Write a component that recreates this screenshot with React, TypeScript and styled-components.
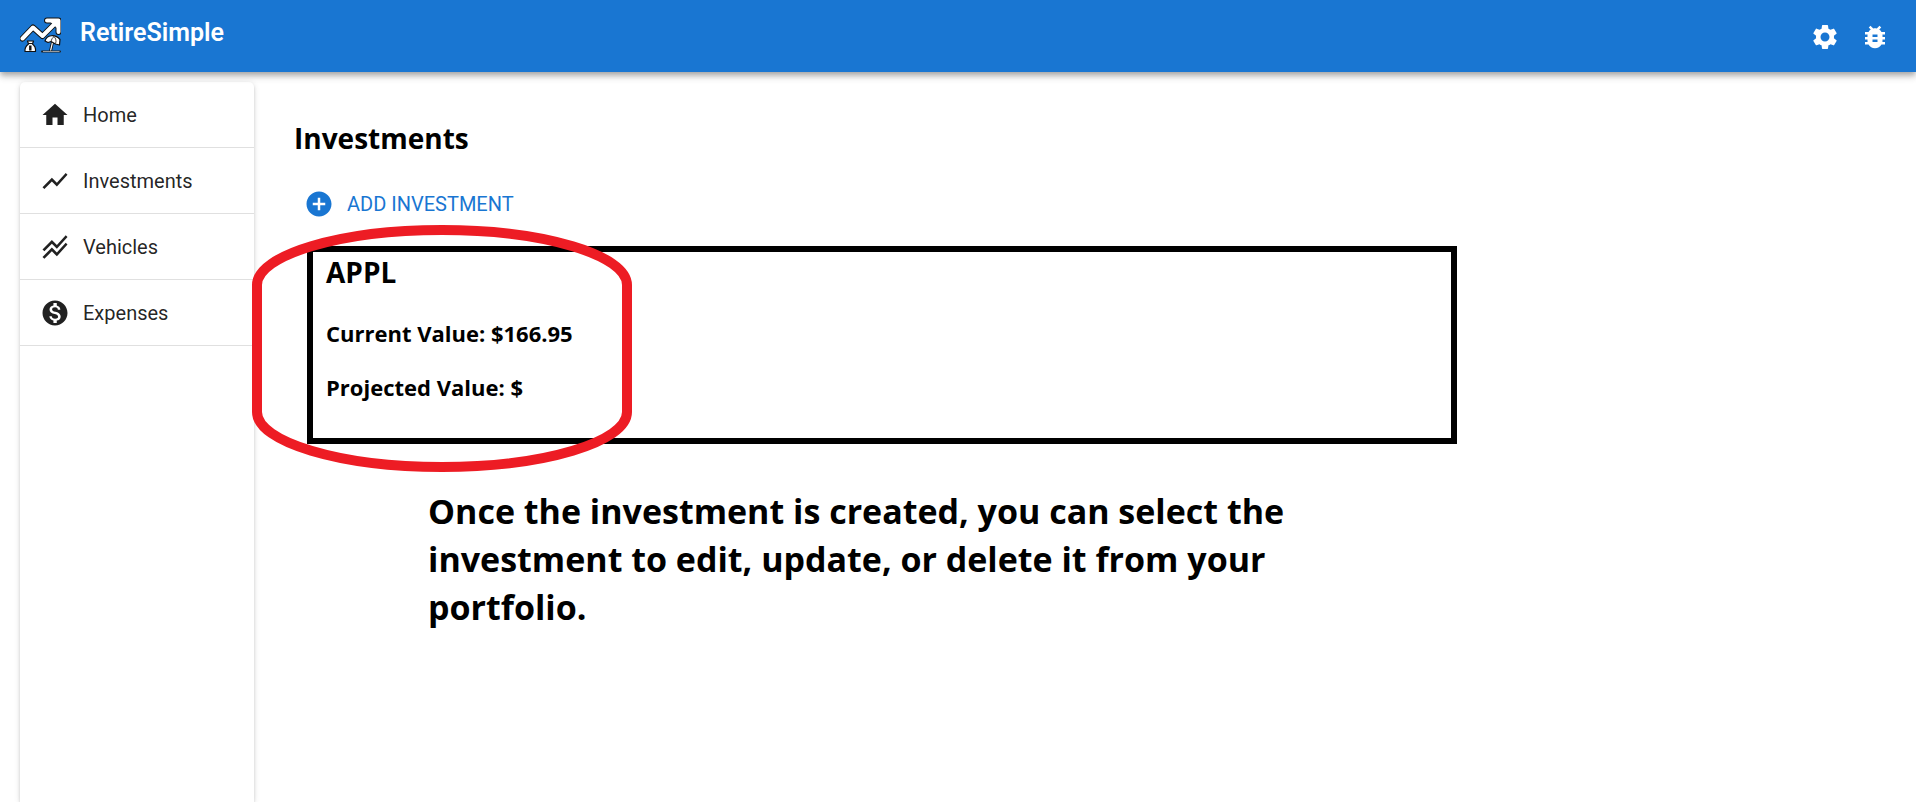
import React from 'react';
import styled, { createGlobalStyle } from 'styled-components';
import {
  MdAddCircle,
  MdBugReport,
  MdHome,
  MdMonetizationOn,
  MdSettings,
  MdShowChart,
  MdStackedLineChart,
} from 'react-icons/md';

const GlobalStyle = createGlobalStyle`
  *, *::before, *::after { box-sizing: border-box; }
  body {
    margin: 0;
    background: #fff;
    color: #000;
    font-family: 'Segoe UI', 'Open Sans', 'Noto Sans', sans-serif;
  }
`;

const ui = `Roboto, 'Liberation Sans', sans-serif`;

const Page = styled.div`
  display: flex;
  flex-direction: column;
  min-height: 100vh;
`;

const TopBar = styled.header`
  position: relative;
  display: flex;
  align-items: flex-start;
  padding: 12px 16px 10px 20px;
  background: #1976d2;
  color: #fff;
  box-shadow: 0 3px 5px -1px rgba(0, 0, 0, 0.2), 0 5px 6px 0 rgba(0, 0, 0, 0.14),
    0 1px 12px 0 rgba(0, 0, 0, 0.12);
`;

const Brand = styled.a`
  display: flex;
  align-items: flex-start;
  gap: 19px;
  margin-right: auto;
  padding-top: 5px;
  color: inherit;
  text-decoration: none;
`;

const BrandName = styled.span`
  font: 600 25px/32px ${ui};
`;

const IconButton = styled.button`
  display: flex;
  align-items: center;
  justify-content: center;
  width: 50px;
  height: 50px;
  border: 0;
  border-radius: 50%;
  background: none;
  color: inherit;
  font-size: 30px;
  cursor: pointer;
`;

const Body = styled.div`
  display: flex;
  flex: 1;
  gap: 40px;
  padding: 10px 20px 0;
`;

const Sidebar = styled.nav`
  flex: none;
  width: 234px;
  border-radius: 5px 5px 0 0;
  background: #fff;
  box-shadow: 0 3px 1px -2px rgba(0, 0, 0, 0.2), 0 2px 3px 0 rgba(0, 0, 0, 0.14),
    0 1px 6px 0 rgba(0, 0, 0, 0.12);
`;

const MenuList = styled.ul`
  margin: 0;
  padding: 0;
  list-style: none;
`;

const MenuItem = styled.li`
  border-bottom: 1px solid #e0e0e0;
`;

const MenuLink = styled.a`
  display: flex;
  align-items: center;
  gap: 13px;
  height: 65px;
  padding: 0 20px;
  color: rgba(0, 0, 0, 0.87);
  font: 400 20px/30px ${ui};
  text-decoration: none;

  svg { font-size: 30px; }
`;

const Main = styled.main`
  flex: 1;
  min-width: 0;
  padding: 36px 0 40px;
`;

const Heading = styled.h2`
  margin: 0;
  font-size: 28px;
  line-height: 40px;
  font-weight: 700;
`;

const AddButton = styled.button`
  display: flex;
  align-items: center;
  gap: 13px;
  margin: 21px 0 17px;
  padding: 10px;
  border: 0;
  background: none;
  color: #1976d2;
  font: 400 20px/30px ${ui};
  text-transform: uppercase;
  cursor: pointer;

  svg { font-size: 30px; }
`;

const CardArea = styled.div`
  position: relative;
  width: 60vw;
  margin-left: 13px;
`;

const Card = styled.article`
  padding: 0 13px 12px;
  border: 6px solid #000;
`;

const Ticker = styled.h2`
  margin: 0 0 26px;
  font-size: 28px;
  line-height: 40px;
  font-weight: 700;
`;

const Figure = styled.h3`
  margin: 0 0 24px;
  font-size: 22px;
  line-height: 30px;
  font-weight: 700;
`;

const Highlight = styled.svg`
  position: absolute;
  top: -21px;
  left: -55px;
  width: 380px;
  height: 247px;
  pointer-events: none;
`;

const Caption = styled.p`
  max-width: 900px;
  margin: 43px 0 0 134px;
  font-size: 34px;
  line-height: 48px;
  font-weight: 700;
`;

const Logo = () => (
  <svg width="41" height="36" viewBox="0 0 41 36" fill="none" aria-hidden="true">
    <g strokeLinejoin="round" strokeLinecap="round">
      <path d="M2.5 21.5 13 10.5 22.5 19 36 5.5M27 3.5H38.5V15" stroke="#111" strokeWidth="6" />
      <path d="M2.5 21.5 13 10.5 22.5 19 36 5.5M27 3.5H38.5V15" stroke="#fff" strokeWidth="4" />
    </g>
    <path d="M30 4.5H38V12Z" fill="#fff" />
    <path d="M7.5 24H13.5L12.5 27C15 29 16 31 15.5 34.5H5C4.5 31 6 29 8.5 27Z" fill="#fff" stroke="#111" strokeWidth="1.2" strokeLinejoin="round" />
    <path d="M8 26.5H13" stroke="#111" />
    <path d="M10.3 28.5V33.5" stroke="#111" strokeWidth="2.4" />
    <path d="M33 23 30.5 34" stroke="#111" strokeWidth="3" />
    <path d="M33 23 30.5 34" stroke="#fff" strokeWidth="1.2" />
    <path d="M25 24C26.5 18 35 16.5 40 22.5L39.5 28 35.5 27 31 24.5 28 25.5Z" fill="#fff" stroke="#111" strokeWidth="1.2" strokeLinejoin="round" />
    <path d="M31 24.5C31.5 22.5 32.5 20.5 34 19.5M35.5 26.5C36.5 24 36 21.5 34 19.5" stroke="#111" strokeWidth="0.8" />
    <path d="M22 34.5H40" stroke="#222" strokeWidth="2" strokeLinecap="round" />
    <path d="M23 34.5H39.5" stroke="#aaa" strokeWidth="0.9" />
  </svg>
);

const menu = [
  { label: 'Home', Icon: MdHome },
  { label: 'Investments', Icon: MdShowChart },
  { label: 'Vehicles', Icon: MdStackedLineChart },
  { label: 'Expenses', Icon: MdMonetizationOn },
];

export default function App() {
  return (
    <Page>
      <GlobalStyle />
      <TopBar>
        <Brand href="#">
          <Logo />
          <BrandName>RetireSimple</BrandName>
        </Brand>
        <IconButton type="button" aria-label="Settings">
          <MdSettings />
        </IconButton>
        <IconButton type="button" aria-label="Report a bug">
          <MdBugReport />
        </IconButton>
      </TopBar>
      <Body>
        <Sidebar>
          <MenuList>
            {menu.map(({ label, Icon }) => (
              <MenuItem key={label}>
                <MenuLink href="#">
                  <Icon />
                  {label}
                </MenuLink>
              </MenuItem>
            ))}
          </MenuList>
        </Sidebar>
        <Main>
          <Heading>Investments</Heading>
          <AddButton type="button">
            <MdAddCircle />
            Add Investment
          </AddButton>
          <CardArea>
            <Card>
              <Ticker>APPL</Ticker>
              <Figure>Current Value: $166.95</Figure>
              <Figure>Projected Value: $</Figure>
            </Card>
            <Highlight viewBox="0 0 380 247" fill="none" aria-hidden="true">
              <path
                d="M5 60C5 30 88 5 190 5S375 30 375 60V187C375 217 292 242 190 242S5 217 5 187Z"
                stroke="#ed1c24"
                strokeWidth="10"
              />
            </Highlight>
          </CardArea>
          <Caption>
            Once the investment is created, you can select the investment to edit, update, or
            delete it from your portfolio.
          </Caption>
        </Main>
      </Body>
    </Page>
  );
}
